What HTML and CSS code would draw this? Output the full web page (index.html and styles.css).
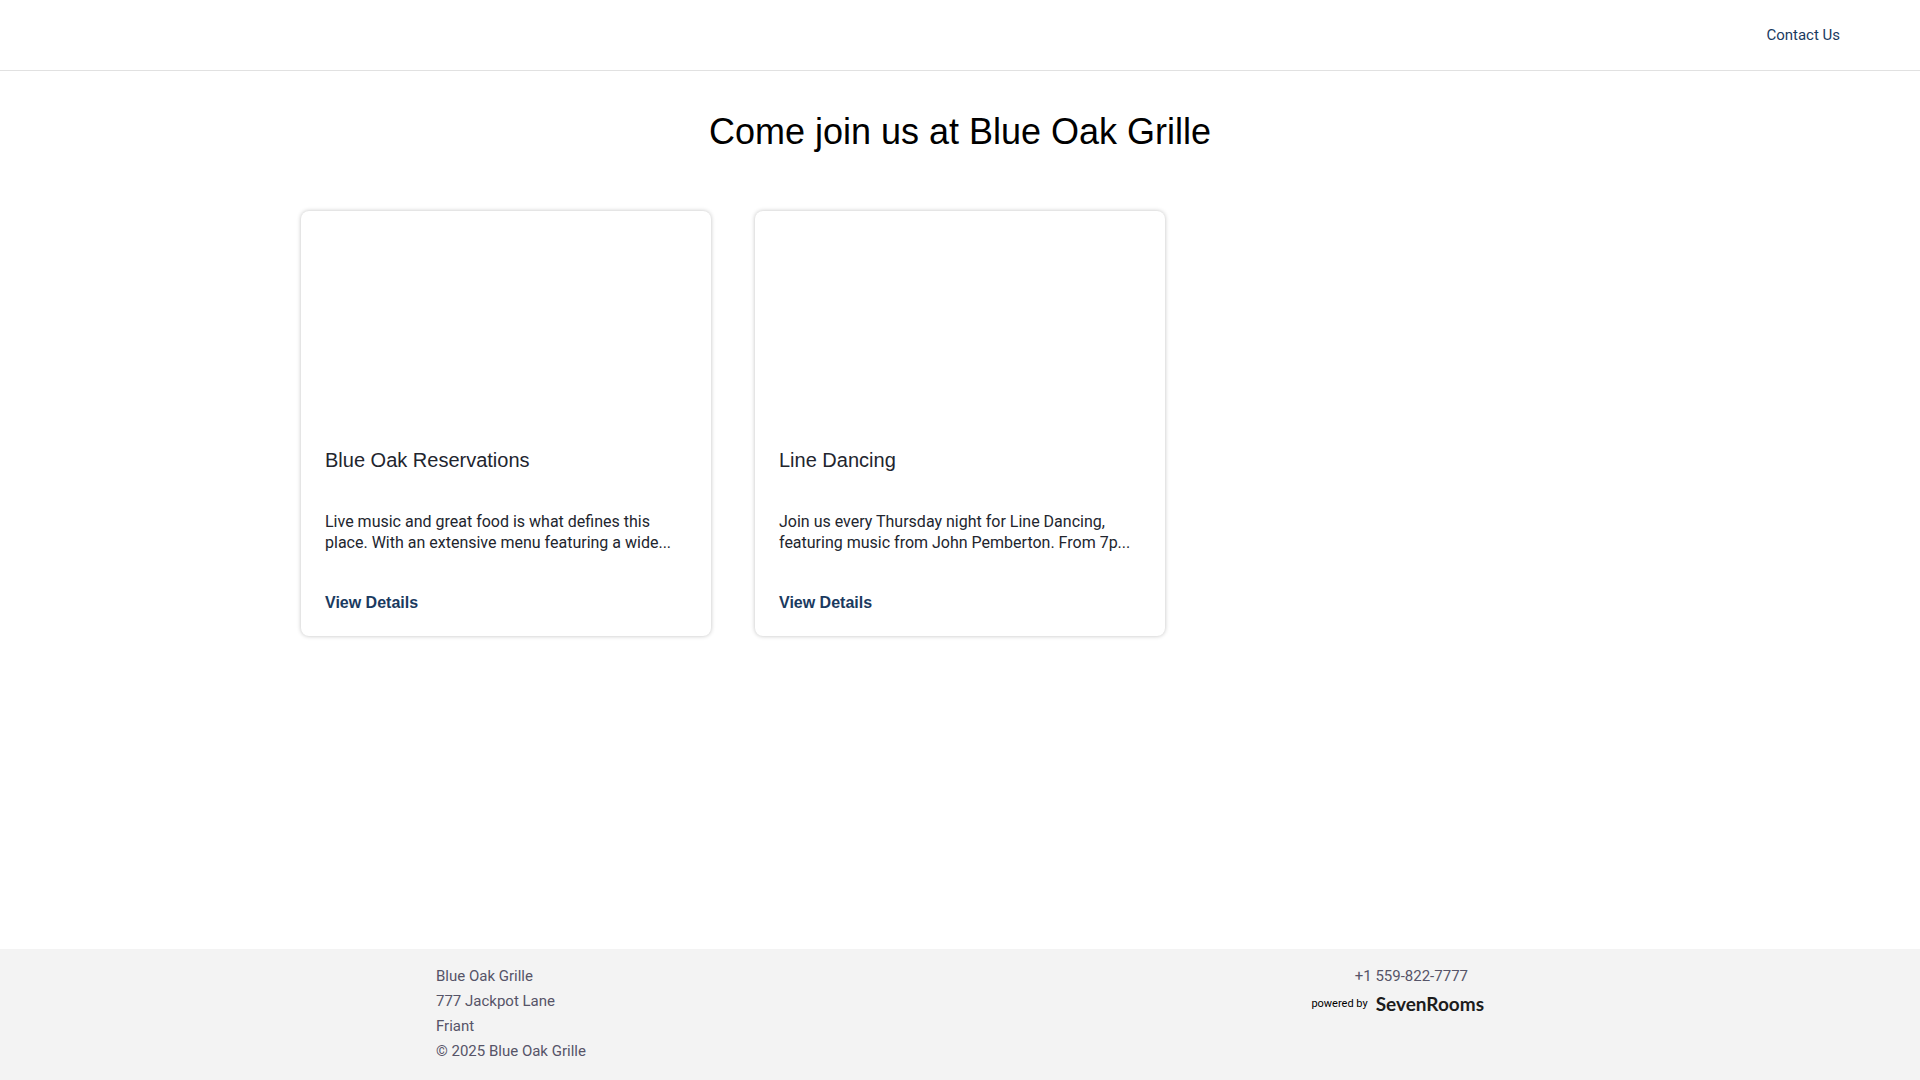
FILE: index.html
```html
<!DOCTYPE html>
<html lang="en">
<head>
  <meta charset="UTF-8">
  <meta name="viewport" content="width=device-width, initial-scale=1.0">
  <title>Blue Oak Grille</title>
  <link rel="stylesheet" href="styles.css">
</head>
<body>
  <header class="header">
    <a class="contact-link" href="#contact">Contact Us</a>
  </header>

  <main class="main">
    <h1>Come join us at Blue Oak Grille</h1>
    <div class="cards">
      <article class="card">
        <div class="card-image"></div>
        <h2>Blue Oak Reservations</h2>
        <p>Live music and great food is what defines this place. With an extensive menu featuring a wide...</p>
        <a class="details-link" href="#reservations">View Details</a>
      </article>
      <article class="card">
        <div class="card-image"></div>
        <h2>Line Dancing</h2>
        <p>Join us every Thursday night for Line Dancing, featuring music from John Pemberton. From 7p...</p>
        <a class="details-link" href="#line-dancing">View Details</a>
      </article>
    </div>
  </main>

  <footer class="footer" id="contact">
    <div class="footer-content">
      <address>
        <div>Blue Oak Grille</div>
        <div>777 Jackpot Lane</div>
        <div>Friant</div>
        <div>© 2025 Blue Oak Grille</div>
      </address>
      <div class="footer-right">
        <a class="phone" href="tel:+15598227777">+1 559-822-7777</a>
        <div class="powered">
          <span>powered by</span>
          <span class="logo">SevenRooms</span>
        </div>
      </div>
    </div>
  </footer>
</body>
</html>
```
FILE: styles.css
```css
* {
  box-sizing: border-box;
}

body {
  font-family: Roboto, sans-serif;
  background-color: #fff;
  color: #22252e;
  margin: 0;
  min-height: 100vh;
  display: flex;
  flex-direction: column;
}

a {
  text-decoration: none;
}

a:hover {
  text-decoration: underline;
}

.header {
  display: flex;
  justify-content: flex-end;
  align-items: center;
  height: 71px;
  padding: 0 80px;
  border-bottom: 1px solid #e1e1e1;
}

.contact-link {
  font-size: 15px;
  color: #1a3a5f;
}

.main {
  flex: 1;
  width: 100%;
  max-width: 1366px;
  margin: 0 auto;
  padding: 40px 24px;
}

h1 {
  font-family: "Liberation Sans", Arial, sans-serif;
  font-size: 36px;
  font-weight: normal;
  line-height: 42px;
  text-align: center;
  color: #000;
  margin: 0 0 58px;
}

.cards {
  display: grid;
  grid-template-columns: repeat(3, 1fr);
  gap: 44px;
}

.card {
  padding-bottom: 23px;
  border-radius: 8px;
  box-shadow: 0 0 4px rgba(0,0,0,0.25);
}

.card-image {
  height: 229px;
}

.card h2 {
  font-family: "Liberation Sans", Arial, sans-serif;
  font-size: 20px;
  font-weight: normal;
  line-height: 24px;
  margin: 8px 24px 39px;
}

.card p {
  font-size: 16px;
  line-height: 21px;
  margin: 0 24px 40px;
}

.details-link {
  display: block;
  font-family: "Liberation Sans", Arial, sans-serif;
  font-size: 16px;
  font-weight: bold;
  line-height: 20px;
  margin: 0 24px;
  color: #1a3a5f;
}

.footer {
  background-color: #f3f3f3;
  padding: 15px 24px 16px;
}

.footer-content {
  display: flex;
  justify-content: space-between;
  max-width: 1048px;
  margin: 0 auto;
  font-size: 15px;
  line-height: 25px;
  color: #565468;
}

address {
  font-style: normal;
}

.footer-right {
  display: flex;
  flex-direction: column;
}

.phone {
  align-self: flex-end;
  padding-right: 16px;
  color: #565468;
}

.powered {
  display: flex;
  justify-content: flex-end;
  align-items: center;
  gap: 8px;
  font-size: 11px;
  line-height: 30px;
  color: #000;
}

.logo {
  font-family: Lato, sans-serif;
  font-size: 19px;
  font-weight: bold;
  color: #1c1c1c;
}
```
